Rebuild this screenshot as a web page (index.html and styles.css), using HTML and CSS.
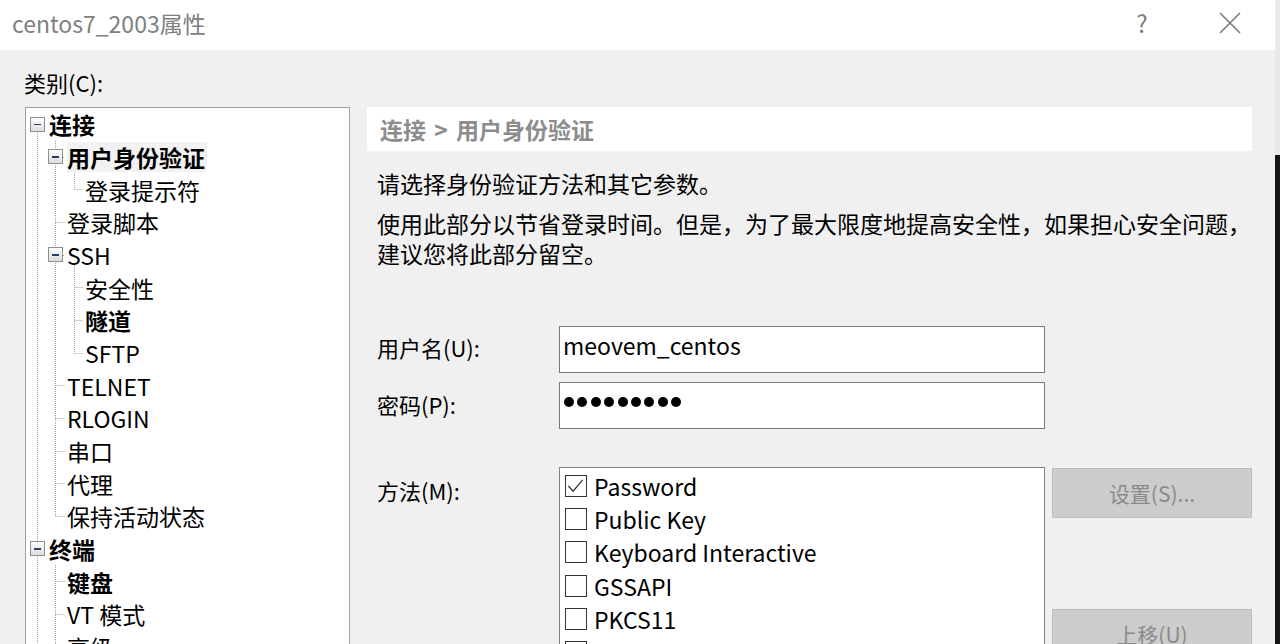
FILE: index.html
```html
<!DOCTYPE html>
<html lang="zh-CN">
<head>
<meta charset="utf-8">
<title>centos7_2003属性</title>
<link rel="stylesheet" href="styles.css">
</head>
<body>
<div class="screen">
  <div class="window">
    <div class="titlebar">
      <span class="title">centos7_2003属性</span>
      <div class="controls">
        <span class="help">?</span>
        <svg class="close" width="22" height="22" viewBox="0 0 22 22"><path d="M1 1 L21 21 M21 1 L1 21" stroke="#7a7a7a" stroke-width="1.6" fill="none"/></svg>
      </div>
    </div>
    <div class="content">
      <div class="left">
        <div class="cat-label">类别(C):</div>
        <div class="tree">
          <svg class="tree-lines" width="320" height="620" viewBox="0 0 320 620">
            <path d="M11.5 16 V620 M29.5 33 V408.5 M29.5 457 V620 M48.5 57 V81.5 M48.5 155 V245.5
                     M48.5 81.5 H57 M48.5 179.5 H57 M48.5 212.5 H57 M48.5 245.5 H57
                     M29.5 114.5 H39 M29.5 277.5 H39 M29.5 310.5 H39 M29.5 343.5 H39 M29.5 375.5 H39 M29.5 408.5 H39
                     M29.5 473.5 H39 M29.5 506.5 H39 M29.5 539.5 H39 M29.5 572 H39
                     M37 49.5 H39 M37 147.5 H39"
                  stroke="#a0a0a0" stroke-width="1" stroke-dasharray="1 1" fill="none"/>
          </svg>
          <div class="rows">
            <div class="row l0 bold"><span class="box"></span><span class="txt">连接</span></div>
            <div class="row l1b bold"><span class="box"></span><span class="txt sel">用户身份验证</span></div>
            <div class="row l2"><span class="txt">登录提示符</span></div>
            <div class="row l1"><span class="txt">登录脚本</span></div>
            <div class="row l1b"><span class="box"></span><span class="txt">SSH</span></div>
            <div class="row l2"><span class="txt">安全性</span></div>
            <div class="row l2 bold"><span class="txt">隧道</span></div>
            <div class="row l2"><span class="txt">SFTP</span></div>
            <div class="row l1"><span class="txt">TELNET</span></div>
            <div class="row l1"><span class="txt">RLOGIN</span></div>
            <div class="row l1"><span class="txt">串口</span></div>
            <div class="row l1"><span class="txt">代理</span></div>
            <div class="row l1"><span class="txt">保持活动状态</span></div>
            <div class="row l0 bold"><span class="box"></span><span class="txt">终端</span></div>
            <div class="row l1 bold"><span class="txt">键盘</span></div>
            <div class="row l1"><span class="txt">VT 模式</span></div>
            <div class="row l1"><span class="txt">高级</span></div>
          </div>
        </div>
      </div>
      <div class="right">
        <div class="crumb">连接 &gt; 用户身份验证</div>
        <p class="desc1">请选择身份验证方法和其它参数。</p>
        <p class="desc2">使用此部分以节省登录时间。但是，为了最大限度地提高安全性，如果担心安全问题，<br>建议您将此部分留空。</p>
        <div class="form-row user-row">
          <span class="label">用户名(U):</span>
          <div class="input"><span class="value">meovem_centos</span></div>
        </div>
        <div class="form-row pass-row">
          <span class="label">密码(P):</span>
          <div class="input"><span class="dots"><i></i><i></i><i></i><i></i><i></i><i></i><i></i><i></i><i></i></span></div>
        </div>
        <div class="form-row method-row">
          <span class="label">方法(M):</span>
          <div class="list">
            <div class="item"><span class="cb"><svg width="22" height="22" viewBox="0 0 22 22"><path d="M3.5 11 L8.5 16.5 L18.5 4.5" stroke="#333" stroke-width="1.3" fill="none"/></svg></span><span>Password</span></div>
            <div class="item"><span class="cb"></span><span>Public Key</span></div>
            <div class="item"><span class="cb"></span><span>Keyboard Interactive</span></div>
            <div class="item"><span class="cb"></span><span>GSSAPI</span></div>
            <div class="item"><span class="cb"></span><span>PKCS11</span></div>
            <div class="item"><span class="cb"></span><span></span></div>
          </div>
          <div class="buttons">
            <div class="btn">设置(S)...</div>
            <div class="btn second">上移(U)</div>
          </div>
        </div>
      </div>
    </div>
  </div>
  <div class="edge"><div class="edge-top"></div><div class="edge-bottom"></div></div>
</div>
</body>
</html>
```
FILE: styles.css
```css
html, body {
  margin: 0;
  padding: 0;
  width: 1280px;
  height: 644px;
  overflow: hidden;
  font-family: "Noto Sans CJK SC", "Noto Sans", sans-serif;
  color: #000;
}
.screen {
  display: flex;
  width: 1280px;
  height: 644px;
}
.window {
  width: 1275px;
  height: 644px;
  display: flex;
  flex-direction: column;
  background: #f0f0f0;
  overflow: hidden;
}
.edge {
  width: 5px;
  display: flex;
  flex-direction: column;
}
.edge-top { height: 155px; background: #e9e9e9; }
.edge-bottom { flex: 1; background: #151515; }

.titlebar {
  height: 50px;
  flex: none;
  background: #fff;
  display: flex;
  align-items: center;
  justify-content: space-between;
}
.title {
  padding-left: 12px;
  font-size: 23px;
  color: #808080;
  line-height: 30px;
  margin-top: -4px;
}
.controls {
  display: flex;
  align-items: center;
  margin-top: -4px;
}
.help {
  font-size: 24px;
  color: #7a7a7a;
  line-height: 30px;
  width: 20px;
  text-align: center;
}
.close {
  margin-left: 67px;
  margin-right: 34px;
}

.content {
  flex: 1;
  display: flex;
  padding-left: 25px;
  gap: 17px;
  min-height: 0;
}
.left {
  width: 325px;
  flex: none;
  display: flex;
  flex-direction: column;
}
.cat-label {
  flex: none;
  font-size: 22px;
  line-height: 32px;
  margin-top: 16px;
  margin-bottom: 9px;
  margin-left: -1px;
}
.tree {
  position: relative;
  flex: 1;
  background: #fff;
  border: 1px solid #a0a0a0;
  border-bottom: none;
  overflow: hidden;
}
.tree-lines {
  position: absolute;
  left: 0;
  top: 0;
}
.rows {
  position: relative;
}
.row {
  height: 32.67px;
  display: flex;
  align-items: center;
  font-size: 23px;
  white-space: nowrap;
}
.row .txt { line-height: 30px; }
.row.bold .txt { font-weight: 700; }
.row.l0 { padding-left: 4px; }
.row.l1b { padding-left: 22px; }
.row.l1 { padding-left: 41px; }
.row.l2 { padding-left: 59px; }
.box {
  width: 13px;
  height: 13px;
  border: 1px solid #8f8f8f;
  background: linear-gradient(#ffffff, #dcdcdc);
  margin-right: 4px;
  position: relative;
  flex: none;
}
.box::after {
  content: "";
  position: absolute;
  left: 3px;
  top: 6px;
  width: 7px;
  height: 1.5px;
  background: #2a3f66;
}
.sel {
  background: #f2f2f2;
  padding-right: 2px;
}

.right {
  width: 885px;
  flex: none;
  display: flex;
  flex-direction: column;
}
.right > * { flex: none; }
.crumb {
  margin-top: 57px;
  height: 44px;
  background: #fff;
  display: flex;
  align-items: center;
  padding-left: 13px;
  font-size: 23px;
  font-weight: 700;
  color: #8c8c8c;
  word-spacing: 3px;
}
.desc1, .desc2 {
  margin: 0;
  padding-left: 10px;
  font-size: 23px;
  line-height: 30px;
  white-space: nowrap;
}
.desc1 { margin-top: 17px; }
.desc2 { margin-top: 10px; }

.form-row {
  display: flex;
  padding-left: 10px;
}
.label {
  width: 182px;
  flex: none;
  font-size: 22px;
  line-height: 30px;
}
.user-row { margin-top: 58px; align-items: center; }
.user-row .label { margin-top: -6px; }
.pass-row { margin-top: 9px; align-items: center; }
.pass-row .label { margin-top: -4px; }
.method-row { margin-top: 38px; align-items: flex-start; }
.method-row .label { margin-top: 8px; }
.input {
  width: 481px;
  height: 45px;
  flex: none;
  background: #fff;
  border: 1px solid #7a7a7a;
  display: flex;
  align-items: center;
  padding-left: 3px;
  box-sizing: content-box;
}
.input .value {
  font-size: 23px;
  line-height: 30px;
  margin-top: -9px;
}
.dots {
  display: flex;
  gap: 3.4px;
  margin-left: 1px;
  margin-top: -8px;
}
.dots i {
  width: 10px;
  height: 10px;
  border-radius: 50%;
  background: #000;
}
.list {
  width: 479px;
  height: 200px;
  flex: none;
  background: #fff;
  border: 1px solid #828282;
  padding-top: 1px;
  padding-left: 5px;
  box-sizing: content-box;
}
.item {
  height: 33.3px;
  display: flex;
  align-items: center;
  font-size: 23px;
}
.cb {
  width: 20px;
  height: 20px;
  border: 1.5px solid #333;
  margin-right: 7px;
  flex: none;
  display: flex;
  background: #fff;
}
.cb svg { margin: -1px 0 0 -1px; }
.buttons {
  margin-left: 7px;
  margin-top: 1px;
  display: flex;
  flex-direction: column;
}
.btn {
  width: 198px;
  height: 48px;
  background: #cccccc;
  border: 1px solid #bdbdbd;
  color: #8a8a8a;
  font-size: 21px;
  display: flex;
  align-items: center;
  justify-content: center;
}
.btn.second { margin-top: 91px; }
```
